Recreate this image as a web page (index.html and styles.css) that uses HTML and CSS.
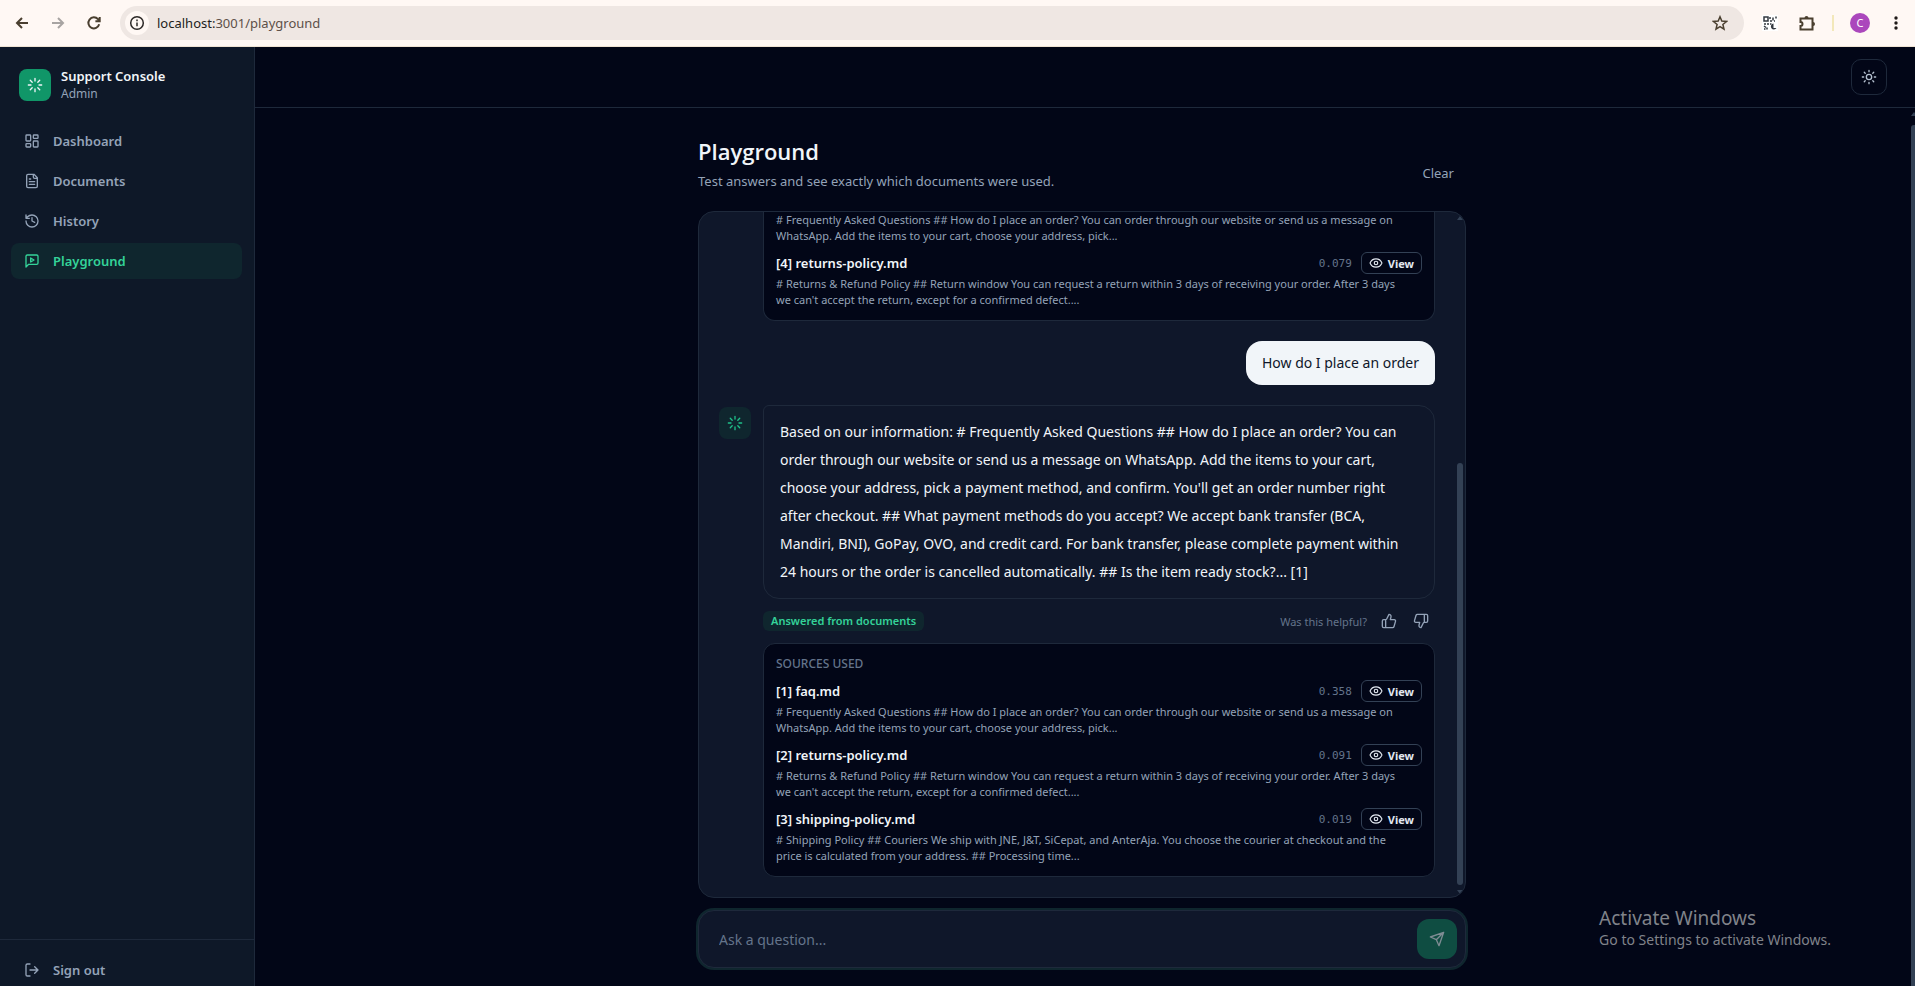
FILE: index.html
```html
<!DOCTYPE html>
<html lang="en">
<head>
<meta charset="utf-8">
<title>Support Console</title>
<link rel="stylesheet" href="styles.css">
</head>
<body>
<svg class="defs" aria-hidden="true">
  <symbol id="loader" viewBox="0 0 24 24"><path d="M12 2v4M12 18v4M4.9 4.9l2.9 2.9M16.2 16.2l2.9 2.9M2 12h4M18 12h4M4.9 19.1l2.9-2.9M16.2 7.8l2.9-2.9"/></symbol>
  <symbol id="eye" viewBox="0 0 24 24"><path d="M2 12.3a1 1 0 0 1 0-.7 10.8 10.8 0 0 1 20 0 1 1 0 0 1 0 .7 10.8 10.8 0 0 1-20 0"/><circle cx="12" cy="12" r="3"/></symbol>
</svg>

<div class="browser">
  <button class="tool" aria-label="Back"><svg class="b-icon" viewBox="0 0 16 16"><path d="M14 8H3M8 3L3 8l5 5"/></svg></button>
  <button class="tool muted" aria-label="Forward"><svg class="b-icon" viewBox="0 0 16 16"><path d="M2 8h11M8 3l5 5-5 5"/></svg></button>
  <button class="tool" aria-label="Reload"><svg class="b-icon" viewBox="0 0 16 16"><path d="M13.2 9.3A5.5 5.5 0 1 1 12 4.2L13.5 6M13.7 2v4.3H9.4"/></svg></button>
  <div class="omnibox">
    <span class="site-info"><svg class="b-icon" viewBox="0 0 16 16"><circle cx="8" cy="8" r="6.3"/><path d="M8 7.4v3.8M8 4.6v1.6"/></svg></span>
    <span class="url"><span class="host">localhost:</span>3001/playground</span>
    <button class="tool star" aria-label="Bookmark"><svg class="b-icon" viewBox="0 0 16 16"><path d="M8 1.8l1.8 4.3 4.7.4-3.6 3 1.1 4.6L8 11.7l-4 2.4 1.1-4.6-3.6-3 4.7-.4z"/></svg></button>
  </div>
  <button class="tool ext" aria-label="QR extension"><svg class="b-icon qr" viewBox="0 0 16 16"><rect x="2" y="2" width="4" height="4"/><path d="M8 2v2M8 6h2M11 2.5v3M14 1.5v2M12 6h1M2 9h2M6 8v2M2 11l2 1.500M2 14h1.500M5 12.500v2M8 9h1.500"/><path class="solid" d="M11.500 8.500a3 3 0 1 0 3 4.500h-3z"/></svg></button>
  <button class="tool ext" aria-label="Extensions"><svg class="b-icon" viewBox="0 0 16 16"><path d="M1.500 3.500h12v4v3v4h-12v-3.500a2 2 0 0 0 0-4z"/><path class="solid" d="M5.500 3a2 2 0 0 1 4 0zM14 7a2 2 0 0 1 0 4z"/></svg></button>
  <span class="divider"></span>
  <button class="profile" aria-label="Profile">C</button>
  <button class="tool dots" aria-label="Menu"><svg class="b-icon" viewBox="0 0 16 16"><circle cx="8" cy="3" r="1.700"/><circle cx="8" cy="8" r="1.700"/><circle cx="8" cy="13" r="1.700"/></svg></button>
</div>

<div class="app">
  <aside class="sidebar">
    <div class="brand">
      <span class="logo"><svg class="icon"><use href="#loader"/></svg></span>
      <div class="brand-text"><span class="brand-name">Support Console</span><span class="brand-role">Admin</span></div>
    </div>
    <nav class="nav">
      <a class="nav-item" href="#"><svg class="icon" viewBox="0 0 24 24"><rect x="3" y="3" width="7" height="9" rx="1"/><rect x="14" y="3" width="7" height="5" rx="1"/><rect x="14" y="12" width="7" height="9" rx="1"/><rect x="3" y="16" width="7" height="5" rx="1"/></svg>Dashboard</a>
      <a class="nav-item" href="#"><svg class="icon" viewBox="0 0 24 24"><path d="M15 2H6a2 2 0 0 0-2 2v16a2 2 0 0 0 2 2h12a2 2 0 0 0 2-2V7zM14 2v4a2 2 0 0 0 2 2h4M10 9H8M16 13H8M16 17H8"/></svg>Documents</a>
      <a class="nav-item" href="#"><svg class="icon" viewBox="0 0 24 24"><path d="M3 12a9 9 0 1 0 9-9 9.750 9.750 0 0 0-6.740 2.740L3 8M3 3v5h5M12 7v5l4 2"/></svg>History</a>
      <a class="nav-item active" href="#"><svg class="icon" viewBox="0 0 24 24"><path d="M21 15a2 2 0 0 1-2 2H7l-4 4V5a2 2 0 0 1 2-2h14a2 2 0 0 1 2 2zM10 7.500l5 3-5 3z"/></svg>Playground</a>
    </nav>
    <div class="side-foot">
      <button class="nav-item"><svg class="icon" viewBox="0 0 24 24"><path d="M9 21H5a2 2 0 0 1-2-2V5a2 2 0 0 1 2-2h4M16 17l5-5-5-5M21 12H9"/></svg>Sign out</button>
    </div>
  </aside>

  <div class="workspace">
    <header class="topbar">
      <button class="theme" aria-label="Toggle theme"><svg class="icon" viewBox="0 0 24 24"><circle cx="12" cy="12" r="4"/><path d="M12 2v2M12 20v2M4.900 4.900l1.400 1.400M17.700 17.700l1.400 1.400M2 12h2M20 12h2M6.300 17.700l-1.400 1.400M19.100 4.900l-1.400 1.400"/></svg></button>
    </header>
    <div class="scroller">
      <main class="page">
        <div class="page-head">
          <div>
            <h1 class="title">Playground</h1>
            <p class="subtitle">Test answers and see exactly which documents were used.</p>
          </div>
          <button class="clear">Clear</button>
        </div>

        <section class="chat">
          <div class="messages">
            <div class="sources continued">
              <p class="snippet"># Frequently Asked Questions ## How do I place an order? You can order through our website or send us a message on<br>WhatsApp. Add the items to your cart, choose your address, pick...</p>
              <div class="source-row"><span class="source-name">[4] returns-policy.md</span><span class="score">0.079</span><button class="view"><svg class="icon"><use href="#eye"/></svg>View</button></div>
              <p class="snippet"># Returns &amp; Refund Policy ## Return window You can request a return within 3 days of receiving your order. After 3 days<br>we can't accept the return, except for a confirmed defect....</p>
            </div>
            <div class="question">How do I place an order</div>
            <div class="answer">
              <span class="bot"><svg class="icon"><use href="#loader"/></svg></span>
              <div class="answer-body">
                <p class="bubble">Based on our information: # Frequently Asked Questions ## How do I place an order? You can<br>order through our website or send us a message on WhatsApp. Add the items to your cart,<br>choose your address, pick a payment method, and confirm. You'll get an order number right<br>after checkout. ## What payment methods do you accept? We accept bank transfer (BCA,<br>Mandiri, BNI), GoPay, OVO, and credit card. For bank transfer, please complete payment within<br>24 hours or the order is cancelled automatically. ## Is the item ready stock?... [1]</p>
                <div class="meta">
                  <span class="badge">Answered from documents</span>
                  <span class="helpful">Was this helpful?</span>
                  <button class="vote" aria-label="Helpful"><svg class="icon" viewBox="0 0 24 24"><path d="M7 10v12M15 5.880L14 10h5.830a2 2 0 0 1 1.920 2.560l-2.330 8A2 2 0 0 1 17.500 22H4a2 2 0 0 1-2-2v-8a2 2 0 0 1 2-2h2.760a2 2 0 0 0 1.790-1.110L12 2a3.130 3.130 0 0 1 3 3.880z"/></svg></button>
                  <button class="vote" aria-label="Not helpful"><svg class="icon" viewBox="0 0 24 24"><path d="M17 14V2M9 18.120L10 14H4.170a2 2 0 0 1-1.920-2.560l2.330-8A2 2 0 0 1 6.500 2H20a2 2 0 0 1 2 2v8a2 2 0 0 1-2 2h-2.760a2 2 0 0 0-1.790 1.110L12 22a3.130 3.130 0 0 1-3-3.880z"/></svg></button>
                </div>
                <div class="sources">
                  <h2 class="sources-title">SOURCES USED</h2>
                  <div class="source-row"><span class="source-name">[1] faq.md</span><span class="score">0.358</span><button class="view"><svg class="icon"><use href="#eye"/></svg>View</button></div>
                  <p class="snippet"># Frequently Asked Questions ## How do I place an order? You can order through our website or send us a message on<br>WhatsApp. Add the items to your cart, choose your address, pick...</p>
                  <div class="source-row"><span class="source-name">[2] returns-policy.md</span><span class="score">0.091</span><button class="view"><svg class="icon"><use href="#eye"/></svg>View</button></div>
                  <p class="snippet"># Returns &amp; Refund Policy ## Return window You can request a return within 3 days of receiving your order. After 3 days<br>we can't accept the return, except for a confirmed defect....</p>
                  <div class="source-row"><span class="source-name">[3] shipping-policy.md</span><span class="score">0.019</span><button class="view"><svg class="icon"><use href="#eye"/></svg>View</button></div>
                  <p class="snippet"># Shipping Policy ## Couriers We ship with JNE, J&amp;T, SiCepat, and AnterAja. You choose the courier at checkout and the<br>price is calculated from your address. ## Processing time...</p>
                </div>
              </div>
            </div>
          </div>
          <div class="chat-bar"><span class="arrow-up"></span><span class="track"><span class="thumb"></span></span><span class="arrow-down"></span></div>
        </section>

        <form class="composer">
          <input class="prompt" type="text" placeholder="Ask a question..." aria-label="Ask a question">
          <button class="send" type="button" aria-label="Send"><svg class="icon" viewBox="0 0 24 24"><path d="M22 2L11 13M22 2l-7 20-4-9-9-4z"/></svg></button>
        </form>
      </main>
      <div class="page-bar"><span class="arrow-up"></span><span class="page-thumb"></span></div>
    </div>
  </div>
</div>

<div class="watermark"><p class="wm-title">Activate Windows</p><p class="wm-text">Go to Settings to activate Windows.</p></div>
</body>
</html>
```

FILE: styles.css
```css
* { box-sizing: border-box; margin: 0; padding: 0; }
body {
  height: 100vh;
  display: flex;
  flex-direction: column;
  overflow: hidden;
  background: #020617;
  color: #f1f5f9;
  font-family: "Noto Sans", "Open Sans", sans-serif;
  font-size: 13px;
}
button, input { font: inherit; color: inherit; background: none; border: 0; }
a { color: inherit; text-decoration: none; }
.defs { display: none; }
.icon {
  width: 16px; height: 16px; flex: none;
  fill: none; stroke: currentColor; stroke-width: 2;
  stroke-linecap: round; stroke-linejoin: round;
}

/* Browser toolbar */
.browser {
  height: 47px; flex: none;
  display: flex; align-items: center;
  padding: 0 10px 0 4px;
  background: #fff8f4;
  border-bottom: 1px solid #efe3d3;
  color: #4a3f2f;
}
.tool { width: 36px; height: 36px; flex: none; display: flex; align-items: center; justify-content: center; }
.tool.muted { color: #a8a4a2; }
.b-icon { width: 16px; height: 16px; fill: none; stroke: currentColor; stroke-width: 2; }
.omnibox {
  flex: 1; height: 34px; margin: 0 8px;
  display: flex; align-items: center;
  padding: 0 6px 0 5px;
  border-radius: 17px; background: #efe7e3;
}
.site-info { width: 24px; height: 24px; border-radius: 50%; background: #fff8f4; color: #2c2826; display: flex; align-items: center; justify-content: center; }
.site-info .b-icon { stroke-width: 1.500; }
.url { flex: 1; margin-left: 8px; color: #5d5048; }
.host { color: #221e1c; }
.star .b-icon { stroke-width: 1.500; }
.ext + .ext { margin-left: 1px; }
.qr { stroke-width: 1.500; color: #33383f; background: #fff; }
.solid { fill: currentColor; stroke: none; }
.divider { width: 2px; height: 16px; margin: 0 16px 0 7px; background: #f3e8ba; }
.profile { width: 20px; height: 20px; border-radius: 50%; background: #ab47bc; color: #fff; font-size: 11px; line-height: 20px; }
.dots { width: 18px; margin-left: 17px; color: #1f1a17; }
.dots .b-icon { fill: currentColor; stroke: none; }

/* Sidebar */
.app { flex: 1; min-height: 0; display: flex; }
.sidebar {
  width: 255px; flex: none;
  display: flex; flex-direction: column;
  background: #0e1828; border-right: 1px solid #1e293b;
}
.brand { display: flex; align-items: center; gap: 10px; padding: 20px 19px; }
.logo { width: 32px; height: 32px; border-radius: 8px; background: #109668; display: flex; align-items: center; justify-content: center; }
.brand-text { display: flex; flex-direction: column; }
.brand-name { font-size: 13px; line-height: 18px; font-weight: 600; }
.brand-role { font-size: 12px; line-height: 18px; color: #94a3b8; }
.nav { flex: 1; display: flex; flex-direction: column; gap: 4px; padding: 0 12px 0 11px; }
.nav-item {
  height: 36px; width: 100%; padding: 0 13px;
  display: flex; align-items: center; gap: 13px;
  border-radius: 8px; color: #94a3b8;
  font-size: 13px; font-weight: 600;
}
.nav-item.active { background: #0f262e; color: #34d399; }
.side-foot { height: 47px; padding: 12px 11px 0; border-top: 1px solid #1e293b; overflow: hidden; }

/* Workspace */
.workspace { flex: 1; min-width: 0; display: flex; flex-direction: column; }
.topbar { height: 61px; flex: none; display: flex; align-items: center; justify-content: flex-end; padding: 0 28px; border-bottom: 1px solid #1e293b; }
.theme { width: 36px; height: 36px; border: 1px solid #1e293b; border-radius: 10px; color: #b6c2d1; display: flex; align-items: center; justify-content: center; }
.scroller { flex: 1; min-height: 0; display: flex; }
.page { flex: 1; max-width: 768px; margin: 0 auto; padding: 27px 0 18px; display: flex; flex-direction: column; }
.page-head { display: flex; justify-content: space-between; align-items: flex-end; margin-bottom: 20px; }
.title { font-family: "Open Sans", "Noto Sans", sans-serif; font-size: 22px; line-height: 32px; font-weight: 600; }
.subtitle { margin-top: 4px; font-size: 13px; line-height: 20px; color: #94a3b8; }
.clear { height: 36px; padding: 0 12px; color: #94a3b8; font-size: 13px; }

/* Chat */
.chat {
  flex: 1; min-height: 0; position: relative; overflow: hidden;
  border: 1px solid #1e293b; border-radius: 16px; background: #0f172a;
}
.messages {
  height: 100%; padding: 0 30px 20px 20px;
  display: flex; flex-direction: column; justify-content: flex-end; gap: 20px;
}
.sources { padding: 12px; border: 1px solid #1e293b; border-radius: 12px; background: #020617; }
.sources.continued { margin-left: 44px; padding-top: 0; border-top: 0; border-radius: 0 0 12px 12px; }
.sources-title { margin-bottom: 8px; font-size: 12px; line-height: 16px; font-weight: 500; color: #64748b; }
.source-row { display: flex; align-items: center; height: 22px; margin-bottom: 2px; }
.source-name { flex: 1; font-size: 13px; font-weight: 600; }
.score { margin-right: 9px; font-family: "DejaVu Sans Mono", monospace; font-size: 11px; color: #64748b; }
.view { height: 22px; padding: 0 7px; display: flex; align-items: center; gap: 5px; border: 1px solid #334155; border-radius: 6px; font-size: 11px; font-weight: 700; color: #e2e8f0; }
.view .icon { width: 14px; height: 14px; }
.snippet { font-size: 11px; line-height: 16px; color: #94a3b8; white-space: nowrap; }
.snippet + .source-row { margin-top: 8px; }
.question { align-self: flex-end; padding: 8px 16px; font-size: 14px; line-height: 28px; background: #f1f5f9; color: #0f172a; border-radius: 16px 16px 6px 16px; }
.answer { display: flex; gap: 12px; }
.bot { width: 32px; height: 32px; flex: none; margin-top: 2px; border-radius: 8px; background: #0f262e; color: #1fc18a; display: flex; align-items: center; justify-content: center; }
.answer-body { flex: 1; min-width: 0; }
.bubble { padding: 12px 16px; border: 1px solid #1e293b; border-radius: 6px 16px 16px 16px; font-size: 14px; line-height: 28px; white-space: nowrap; }
.meta { display: flex; align-items: center; height: 20px; margin: 12px 0; color: #94a3b8; }
.badge { padding: 0 8px; border-radius: 6px; background: #0f262e; color: #34d399; font-size: 11px; line-height: 20px; font-weight: 600; }
.helpful { margin: 0 8px 0 auto; font-size: 11px; color: #64748b; }
.vote { width: 28px; height: 28px; display: flex; align-items: center; justify-content: center; }
.vote + .vote { margin-left: 4px; }

/* Scrollbars */
.chat-bar { position: absolute; top: 4px; right: 2px; bottom: 3px; width: 6px; display: flex; flex-direction: column; align-items: center; gap: 5px; }
.track { flex: 1; width: 100%; display: flex; flex-direction: column; justify-content: flex-end; }
.thumb { height: 64%; border-radius: 3px; background: #334155; }
.arrow-up, .arrow-down { width: 6px; height: 4px; background: #334155; clip-path: polygon(50% 0, 100% 100%, 0 100%); }
.arrow-down { clip-path: polygon(0 0, 100% 0, 50% 100%); }
.page-bar { width: 6px; padding: 4px 0 0 2px; display: flex; flex-direction: column; gap: 9px; }
.page-thumb { flex: 1; background: #334155; border-top-left-radius: 3px; }

/* Composer */
.composer {
  height: 58px; flex: none; margin-top: 12px; padding: 0 8px 0 20px;
  display: flex; align-items: center;
  border: 1px solid #1e293b; border-radius: 16px;
  background: #0f172a; box-shadow: 0 0 0 2px #0f262e;
}
.prompt { flex: 1; min-width: 0; height: 40px; font-size: 14px; outline: 0; }
.prompt::placeholder { color: #64748b; opacity: 1; }
.send { width: 40px; height: 40px; border-radius: 12px; background: #0f4d42; color: #7e8c93; display: flex; align-items: center; justify-content: center; }

.watermark { position: absolute; right: 84px; bottom: 36px; color: #80838a; }
.wm-title { font-size: 19px; line-height: 24px; }
.wm-text { font-size: 14px; line-height: 20px; }
```
